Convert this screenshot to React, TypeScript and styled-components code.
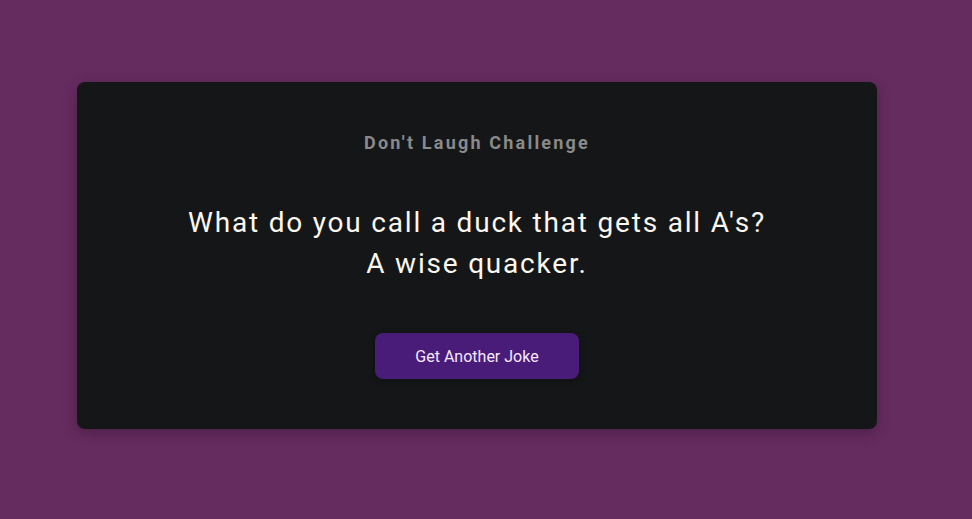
import React from "react";
import styled, { createGlobalStyle } from "styled-components";

const Global = createGlobalStyle`
  html, body { margin: 0; padding: 0; }
  body {
    background: #652c5f;
    font-family: Roboto, "Liberation Sans", sans-serif;
  }
`;

const Page = styled.div`
  width: 972px;
  height: 519px;
  display: flex;
  justify-content: center;
  padding: 82px 18px 0 0;
  box-sizing: border-box;
`;

const Card = styled.div`
  width: 800px;
  height: 347px;
  box-sizing: border-box;
  background: #151617;
  border-radius: 8px;
  box-shadow: 0 4px 14px rgba(0, 0, 0, 0.25);
  display: flex;
  flex-direction: column;
  align-items: center;
  padding-top: 50px;
`;

const Title = styled.h2`
  margin: 0;
  font-size: 18px;
  line-height: 22px;
  font-weight: 700;
  letter-spacing: 2.2px;
  color: #8a8a8a;
`;

const Joke = styled.p`
  margin: 48px 0 0;
  font-size: 28px;
  line-height: 41px;
  letter-spacing: 1.8px;
  color: #fbf7ee;
  text-align: center;
`;

const Button = styled.button`
  margin-top: 49px;
  width: 204px;
  height: 46px;
  border: none;
  border-radius: 8px;
  background: #4a1c7a;
  color: #f6e9ff;
  font-family: Roboto, "Liberation Sans", sans-serif;
  font-size: 16px;
  box-shadow: 0 2px 6px rgba(0, 0, 0, 0.3);
  cursor: pointer;
`;

export default function App() {
  return (
    <>
      <Global />
      <Page>
        <Card>
          <Title>Don't Laugh Challenge</Title>
          <Joke>
            What do you call a duck that gets all A's?
            <br />
            A wise quacker.
          </Joke>
          <Button>Get Another Joke</Button>
        </Card>
      </Page>
    </>
  );
}
